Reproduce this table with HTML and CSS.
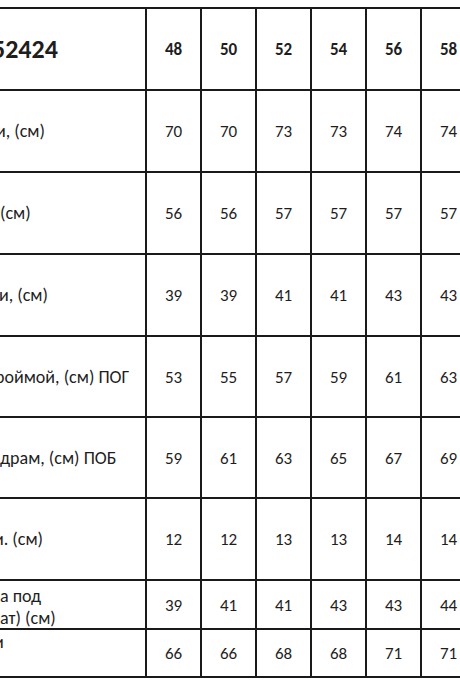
FILE: index.html
```html
<!DOCTYPE html>
<html lang="ru">
<head>
<meta charset="utf-8">
<title>Размерная таблица</title>
<link rel="stylesheet" href="styles.css">
</head>
<body>
<div class="viewport">
  <div class="chart">
    <div class="cell label head"><span class="cut-title">52424</span></div>
    <div class="cell num head">48</div>
    <div class="cell num head">50</div>
    <div class="cell num head">52</div>
    <div class="cell num head">54</div>
    <div class="cell num head">56</div>
    <div class="cell num head">58</div>

    <div class="cell label"><span class="cut-s">и, (см)</span></div>
    <div class="cell num">70</div><div class="cell num">70</div><div class="cell num">73</div><div class="cell num">73</div><div class="cell num">74</div><div class="cell num">74</div>

    <div class="cell label"><span class="cut-none">(см)</span></div>
    <div class="cell num">56</div><div class="cell num">56</div><div class="cell num">57</div><div class="cell num">57</div><div class="cell num">57</div><div class="cell num">57</div>

    <div class="cell label"><span class="cut-xs">и, (см)</span></div>
    <div class="cell num">39</div><div class="cell num">39</div><div class="cell num">41</div><div class="cell num">41</div><div class="cell num">43</div><div class="cell num">43</div>

    <div class="cell label"><span class="cut-m">роймой, (см) ПОГ</span></div>
    <div class="cell num">53</div><div class="cell num">55</div><div class="cell num">57</div><div class="cell num">59</div><div class="cell num">61</div><div class="cell num">63</div>

    <div class="cell label"><span class="cut-none">драм, (см) ПОБ</span></div>
    <div class="cell num">59</div><div class="cell num">61</div><div class="cell num">63</div><div class="cell num">65</div><div class="cell num">67</div><div class="cell num">69</div>

    <div class="cell label"><span class="cut-l">и. (см)</span></div>
    <div class="cell num">12</div><div class="cell num">12</div><div class="cell num">13</div><div class="cell num">13</div><div class="cell num">14</div><div class="cell num">14</div>

    <div class="cell label two"><span class="cut-none">а под<br>ат) (см)</span></div>
    <div class="cell num">39</div><div class="cell num">41</div><div class="cell num">41</div><div class="cell num">43</div><div class="cell num">43</div><div class="cell num">44</div>

    <div class="cell label top"><span class="cut-l">и</span></div>
    <div class="cell num">66</div><div class="cell num">66</div><div class="cell num">68</div><div class="cell num">68</div><div class="cell num">71</div><div class="cell num">71</div>
  </div>
</div>
</body>
</html>
```
FILE: styles.css
```css
* { box-sizing: border-box; }
html, body { margin: 0; padding: 0; background: #fff; }
body {
  font-family: "Carlito", "Lato", "Liberation Sans", sans-serif;
  color: #1e1e1e;
  width: 460px;
  height: 690px;
  overflow: hidden;
}
.viewport {
  width: 460px;
  overflow: hidden;
  padding-top: 7px;
}
.chart {
  display: grid;
  grid-template-columns: 147px repeat(6, 55px);
  grid-template-rows: 82px 82px 82px 82px 81px 81px 82px 49px 48px;
  width: 477px;
  border-top: 2px solid #1a1a1a;
}
.cell {
  border-right: 2px solid #1a1a1a;
  border-bottom: 2px solid #1a1a1a;
  display: flex;
  align-items: center;
  font-size: 17px;
  overflow: hidden;
  white-space: nowrap;
}
.num { justify-content: center; padding-top: 1px; }
.head { font-weight: 700; }
.label { justify-content: flex-start; font-size: 18px; }
.label.head { font-size: 26px; }
.label.top { align-items: flex-start; padding-top: 1px; }
.label.two { line-height: 22px; padding-top: 4px; }
.cut-title { margin-left: -8px; }
.cut-s { margin-left: -4px; }
.cut-xs { margin-left: -1px; }
.cut-m { margin-left: -5px; }
.cut-l { margin-left: -6px; }
.cut-none { margin-left: 0; }
```
